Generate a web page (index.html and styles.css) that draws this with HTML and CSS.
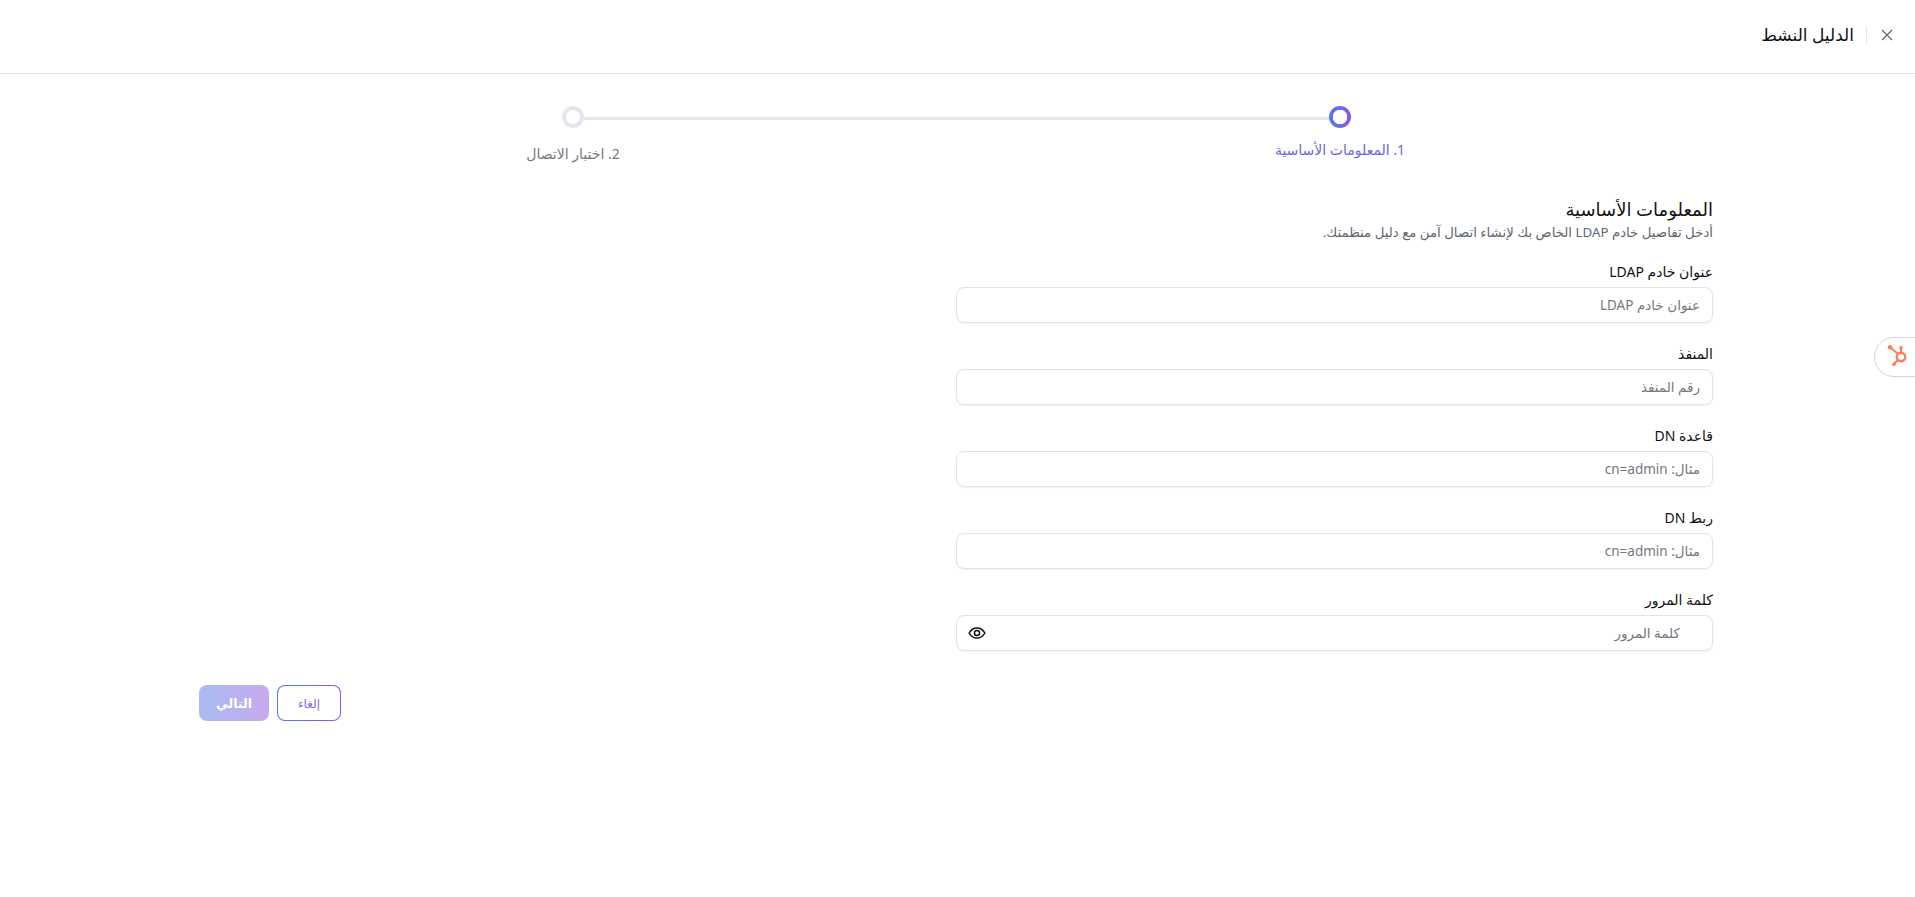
FILE: index.html
```html
<!DOCTYPE html>
<html lang="ar" dir="rtl">

<head>
    <meta charset="UTF-8" />
    <meta name="viewport" content="width=device-width, initial-scale=1" />
    <title>الدليل النشط</title>
    <link rel="stylesheet" href="styles.css">
</head>

<body>
    <header class="top-bar">
        <button class="close-btn" type="button" aria-label="إغلاق">
            <svg width="12" height="12" viewBox="0 0 12 12" fill="none" stroke="#5b6472" stroke-width="1.1">
                <path d="M1 1l10 10M11 1L1 11" />
            </svg>
        </button>
        <h1 class="top-title">الدليل النشط</h1>
    </header>

    <div class="stepper">
        <div class="step step-active">
            <span class="step-dot"></span>
            <span class="step-label">1. المعلومات الأساسية</span>
        </div>
        <div class="step-line"></div>
        <div class="step">
            <span class="step-dot"></span>
            <span class="step-label">2. اختبار الاتصال</span>
        </div>
    </div>

    <main class="content">
        <form class="ldap-form">
            <h2 class="form-title">المعلومات الأساسية</h2>
            <p class="form-sub">أدخل تفاصيل خادم LDAP الخاص بك لإنشاء اتصال آمن مع دليل منظمتك.</p>

            <div class="field">
                <label for="host">عنوان خادم LDAP</label>
                <input type="text" id="host" placeholder="عنوان خادم LDAP" />
            </div>
            <div class="field">
                <label for="port">المنفذ</label>
                <input type="text" id="port" placeholder="رقم المنفذ" />
            </div>
            <div class="field">
                <label for="baseDn">قاعدة DN</label>
                <input type="text" id="baseDn" placeholder="مثال: cn=admin" />
            </div>
            <div class="field">
                <label for="bindDn">ربط DN</label>
                <input type="text" id="bindDn" placeholder="مثال: cn=admin" />
            </div>
            <div class="field">
                <label for="password">كلمة المرور</label>
                <div class="password-wrap">
                    <input type="password" id="password" class="password-input" placeholder="كلمة المرور" />
                    <svg class="eye-icon" width="18" height="18" viewBox="0 0 24 24" fill="none" stroke="#111" stroke-width="2">
                        <path d="M1.5 12C4 7.5 7.6 5.2 12 5.2s8 2.3 10.5 6.8c-2.5 4.5-6.1 6.8-10.5 6.8S4 16.500 1.500 12z" />
                        <circle cx="12" cy="12" r="3.4" />
                    </svg>
                </div>
            </div>
        </form>

        <div class="actions">
            <button class="btn-cancel" type="button"><span>إلغاء</span></button>
            <button class="btn-next" type="button">التالي</button>
        </div>
    </main>

    <div class="hub-tab">
        <svg width="24" height="24" viewBox="0 0 24 24" fill="none" stroke="#ff7a59">
            <circle cx="14" cy="12" r="4.200" stroke-width="2.400" />
            <path d="M11 9L3.500 2.500M14 8V3M10.800 15L7.500 18.500" stroke-width="2" />
            <circle cx="3" cy="2.200" r="2.200" fill="#ff7a59" stroke="none" />
            <circle cx="14" cy="2.700" r="1.800" fill="#ff7a59" stroke="none" />
            <circle cx="7" cy="19.200" r="1.800" fill="#ff7a59" stroke="none" />
        </svg>
    </div>
</body>

</html>
```

FILE: styles.css
```css
* {
    box-sizing: border-box;
}

body {
    margin: 0;
    min-height: 897px;
    overflow: hidden;
    background-color: #fff;
    color: #111;
    font-family: "Noto Sans", "DejaVu Sans", sans-serif;
}

.top-bar {
    display: flex;
    align-items: center;
    height: 74px;
    padding: 0 22px 4px;
    border-bottom: 1px solid #e3e5e8;
}

.close-btn {
    display: flex;
    align-items: center;
    padding: 0 0 0 14px;
    margin-left: 12px;
    height: 18px;
    border: none;
    border-left: 1px solid #e3e5e8;
    background: none;
}

.top-title {
    margin: 0;
    font-size: 17px;
    font-weight: 500;
}

.stepper {
    display: flex;
    padding: 32px 564px 0 562px;
}

.step {
    display: flex;
    flex-direction: column;
    align-items: center;
    width: 22px;
}

.step-dot {
    flex-shrink: 0;
    width: 22px;
    height: 22px;
    border: 4px solid #e3e7ec;
    border-radius: 50%;
}

.step-active .step-dot {
    border: none;
    background: radial-gradient(circle, #fff 7px, transparent 7.5px), linear-gradient(90deg, #4f7be8, #8f55e8);
}

.step-label {
    margin-top: 16px;
    font-size: 14px;
    line-height: 20px;
    white-space: nowrap;
    color: #74787f;
}

.step-active .step-label {
    margin-top: 12px;
    color: #6a66e6;
}

.step-line {
    flex: 1;
    height: 3px;
    margin-top: 11px;
    background-color: #e3e7ec;
}

.content {
    padding: 0 202px 0 199px;
}

.ldap-form {
    width: 757px;
    margin-top: 32px;
}

.form-title {
    margin: 0;
    font-size: 18px;
    font-weight: 500;
    line-height: 26px;
}

.form-sub {
    margin: 0 0 20px;
    font-size: 13.3px;
    line-height: 20px;
    color: #5f6670;
}

.field {
    margin-bottom: 21px;
}

.field label {
    display: block;
    margin-bottom: 5px;
    font-size: 14px;
    line-height: 20px;
}

.field input {
    display: block;
    width: 100%;
    height: 36px;
    padding: 0 12px;
    font-family: inherit;
    font-size: 13.5px;
    border: 1px solid #e1e3e6;
    border-radius: 8px;
    box-shadow: 0 1px 2px rgba(16, 24, 40, 0.05);
    outline: none;
}

.field input::placeholder {
    color: #74787f;
}

.password-wrap {
    position: relative;
}

.field .password-input {
    padding-right: 32px;
}

.eye-icon {
    position: absolute;
    left: 12px;
    top: 9px;
}

.actions {
    display: flex;
    flex-direction: row;
    justify-content: flex-end;
    gap: 8px;
    margin-top: 34px;
}

.btn-cancel {
    width: 64px;
    height: 36px;
    padding: 0;
    font-family: inherit;
    font-size: 12px;
    color: #7a6ee6;
    border: 1.500px solid transparent;
    border-radius: 8px;
    background: linear-gradient(#fff, #fff) padding-box, linear-gradient(90deg, #4f7be8, #8f55e8) border-box;
}

.btn-next {
    width: 70px;
    height: 36px;
    padding: 0;
    font-family: inherit;
    font-size: 12.5px;
    font-weight: 600;
    color: #fff;
    border: none;
    border-radius: 8px;
    background: linear-gradient(90deg, #a8bcf2, #c9a9ee);
}

.hub-tab {
    position: absolute;
    top: 337px;
    right: -20px;
    display: flex;
    align-items: center;
    width: 61px;
    height: 40px;
    padding-right: 23px;
    border: 1px solid #cbd6e2;
    border-radius: 20px;
    background-color: #fff;
}
```
